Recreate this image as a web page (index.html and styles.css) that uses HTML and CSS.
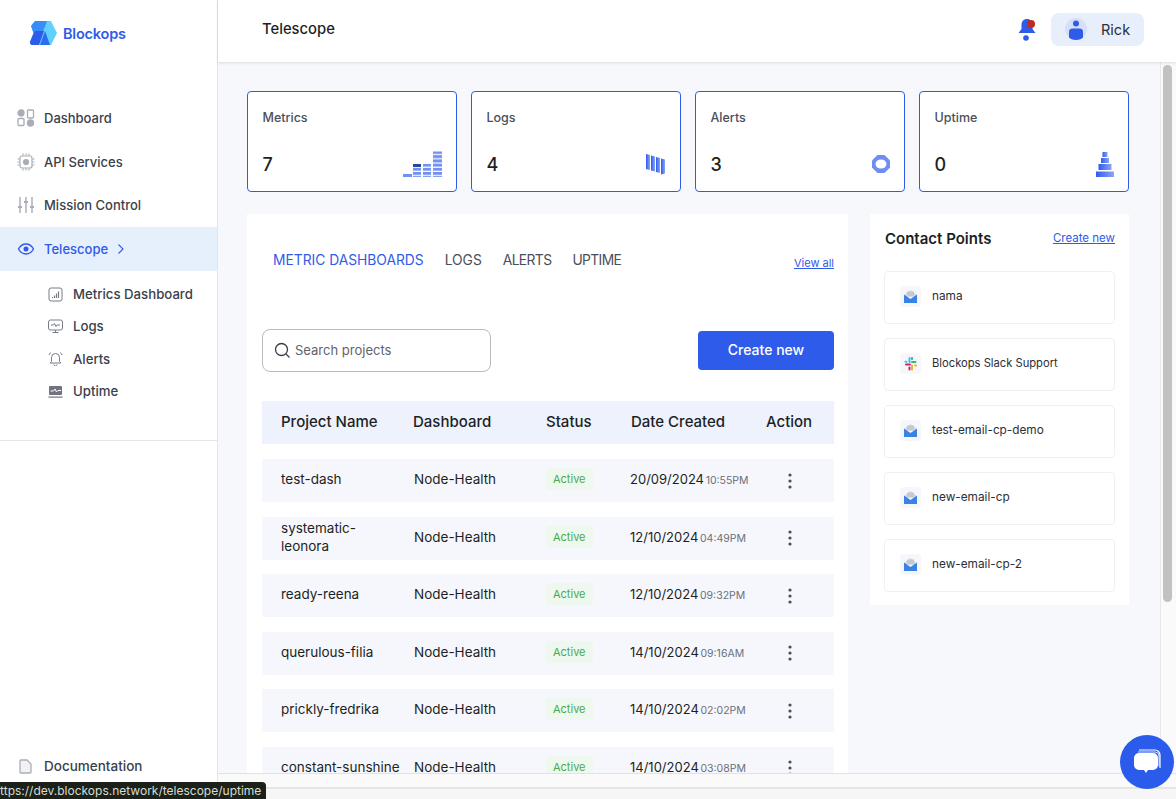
FILE: index.html
```html
<!DOCTYPE html>
<html lang="en">
<head>
  <meta charset="UTF-8">
  <meta name="viewport" content="width=device-width, initial-scale=1.0">
  <title>Telescope</title>
  <link rel="stylesheet" href="styles.css">
</head>
<body>
  <svg class="defs" width="0" height="0">
    <defs>
      <linearGradient id="blueFade" x1="0" y1="0" x2="1" y2="0">
        <stop offset="0" stop-color="#2f5bea"/>
        <stop offset="1" stop-color="#8ba6f5"/>
      </linearGradient>
      <pattern id="stripes" width="4" height="4.2" patternUnits="userSpaceOnUse">
        <rect width="4" height="3" fill="#7391f2"/>
      </pattern>
      <symbol id="mail" viewBox="0 0 21 21">
        <rect width="21" height="21" rx="4" fill="#f6f7fb"/>
        <path d="M5 8l5.500-4 5.500 4v3H5z" fill="#d8dbe2"/>
        <rect x="7" y="5.500" width="7" height="4.500" fill="#c4c8d0"/>
        <path d="M4 8.500l6.500 4.500L17 8.500V17H4z" fill="#3b82e6"/>
      </symbol>
      <symbol id="dots" viewBox="0 0 4 16">
        <circle cx="2" cy="2" r="1.600"/>
        <circle cx="2" cy="8" r="1.600"/>
        <circle cx="2" cy="14" r="1.600"/>
      </symbol>
    </defs>
  </svg>

  <div class="app">
    <aside class="sidebar">
      <div class="logo">
        <svg width="27" height="24" viewBox="0 0 27 24">
          <path d="M5 0h16l6 12-6 12H3a3 3 0 0 1-3-3l3.500-9L1 5z" fill="#62d0ff"/>
          <path d="M5 0h12L8 24H3a3 3 0 0 1-3-3l3.500-9L1 5z" fill="#3a8cf7"/>
          <path d="M0 21l5-11h9l-5 14H3a3 3 0 0 1-3-3z" fill="#2f5bea"/>
          <path d="M10 24l5-14 5 14z" fill="#2b6cf0"/>
        </svg>
        <span class="logo-text">Blockops</span>
      </div>

      <nav class="nav">
        <a class="nav-item">
          <svg width="18" height="18" viewBox="0 0 18 18" fill="none" stroke="#a9adb5" stroke-width="1.300">
            <circle cx="4" cy="4" r="3" fill="#a9adb5"/>
            <rect x="10.500" y="1" width="6" height="8" rx="1"/>
            <rect x="1" y="9.500" width="6" height="7" rx="1"/>
            <circle cx="13.500" cy="14" r="3" fill="#a9adb5"/>
          </svg>
          Dashboard
        </a>
        <a class="nav-item">
          <svg width="18" height="18" viewBox="0 0 18 18" fill="none" stroke="#a9adb5" stroke-width="1.200">
            <rect x="3" y="3" width="12" height="12" rx="2"/>
            <circle cx="9" cy="9" r="2.500" fill="#a9adb5"/>
            <path d="M6 0.500v2M9 0.500v2M12 0.500v2M6 15.500v2M9 15.500v2M12 15.500v2M0.500 6h2M0.500 9h2M0.500 12h2M15.500 6h2M15.500 9h2M15.500 12h2"/>
          </svg>
          API Services
        </a>
        <a class="nav-item">
          <svg width="18" height="18" viewBox="0 0 18 18" fill="none" stroke="#a9adb5" stroke-width="1.400">
            <path d="M3 1v16M9 1v16M15 1v16"/>
            <path d="M1 11h4M7 6h4M13 11h4" stroke-width="2"/>
          </svg>
          Mission Control
        </a>
        <a class="nav-item nav-active">
          <svg width="18" height="18" viewBox="0 0 18 18" fill="none" stroke="#2f5bea" stroke-width="1.400">
            <path d="M1.500 9c2-3.500 4.500-5 7.500-5s5.500 1.500 7.500 5c-2 3.500-4.500 5-7.500 5s-5.500-1.500-7.500-5z"/>
            <circle cx="9" cy="9" r="1.800" fill="#2f5bea"/>
          </svg>
          Telescope
          <svg width="8" height="12" viewBox="0 0 8 12" fill="none" stroke="#2f5bea" stroke-width="1.100">
            <path d="M1.500 1.500L6 6l-4.500 4.500"/>
          </svg>
        </a>
      </nav>

      <div class="subnav">
        <a class="sub-item">
          <svg width="15" height="15" viewBox="0 0 15 15" fill="none" stroke="#777c86" stroke-width="1">
            <rect x="1" y="1" width="13" height="13" rx="2"/>
            <path d="M4.500 11V10M6.500 11V8.500M8.500 11V6.500M10.500 11V4.500" stroke-width="1.200"/>
          </svg>
          Metrics Dashboard
        </a>
        <a class="sub-item">
          <svg width="15" height="15" viewBox="0 0 15 15" fill="none" stroke="#777c86" stroke-width="1">
            <rect x="0.500" y="1" width="14" height="10" rx="2"/>
            <path d="M3 6h2.500l1-1.500 1.500 3 1-1.500H12M4.500 13.500h6M7.500 11v2.500"/>
          </svg>
          Logs
        </a>
        <a class="sub-item">
          <svg width="15" height="15" viewBox="0 0 15 15" fill="none" stroke="#777c86" stroke-width="1">
            <path d="M3.500 10.500V6.500a4 4 0 0 1 8 0v4l1.500 1.500H2zM6 13.500a1.500 1.500 0 0 0 3 0M1 4l1.500-2.500M14 4l-1.500-2.500"/>
          </svg>
          Alerts
        </a>
        <a class="sub-item">
          <svg width="15" height="15" viewBox="0 0 15 15">
            <rect x="1" y="2" width="13" height="9" rx="1" fill="#6f747e"/>
            <path d="M2.500 7h3l1.500-2 1.500 3 1.500-1.500h3" fill="none" stroke="#fff" stroke-width="1"/>
            <rect x="0.500" y="12.500" width="14" height="1.200" fill="#6f747e"/>
          </svg>
          Uptime
        </a>
      </div>

      <div class="sidebar-rule"></div>

      <a class="nav-item doc-link">
        <svg width="13" height="15" viewBox="0 0 13 15" fill="none" stroke="#a9adb5" stroke-width="1.300">
          <path d="M2 1h6l4 4v8a1 1 0 0 1-1 1H2a1 1 0 0 1-1-1V2a1 1 0 0 1 1-1z" fill="#f1f2f4"/>
        </svg>
        Documentation
      </a>
    </aside>

    <div class="main">
      <header class="topbar">
        <h1 class="page-title">Telescope</h1>
        <div class="topbar-right">
          <svg class="bell" width="20" height="24" viewBox="0 0 20 24">
            <path d="M10 1c-3.500 0-5.500 2.500-5.500 6v4L1.500 15h17l-3-4V7c0-3.500-2-6-5.500-6z" fill="#2f5bea"/>
            <circle cx="9" cy="20" r="2.800" fill="#2f5bea"/>
            <circle cx="14" cy="6" r="4" fill="#c22a20"/>
          </svg>
          <div class="user-pill">
            <div class="avatar">
              <svg width="16" height="20" viewBox="0 0 16 20">
                <circle cx="8" cy="3.500" r="3" fill="#2f5bea"/>
                <path d="M1 20v-8a3.500 3.500 0 0 1 3.500-3.500h7A3.500 3.500 0 0 1 15 12v8z" fill="#2f5bea"/>
              </svg>
            </div>
            <span>Rick</span>
          </div>
        </div>
      </header>

      <div class="body-row">
        <div class="content">
          <div class="stats">
            <div class="stat-card">
              <div class="stat-label">Metrics</div>
              <div class="stat-bottom">
                <span class="stat-value">7</span>
                <svg width="39" height="26" viewBox="0 0 39 26">
                  <rect x="0" y="23" width="9" height="3" fill="#7391f2"/>
                  <rect x="10" y="13" width="8" height="13" fill="url(#stripes)"/>
                  <rect x="10" y="13" width="8" height="3" fill="#27479f"/>
                  <rect x="20" y="13" width="8" height="13" fill="url(#stripes)"/>
                  <rect x="30" y="0.500" width="9" height="25.500" fill="url(#stripes)"/>
                </svg>
              </div>
            </div>
            <div class="stat-card">
              <div class="stat-label">Logs</div>
              <div class="stat-bottom">
                <span class="stat-value">4</span>
                <svg class="stat-logs" width="19" height="21" viewBox="0 0 19 21">
                  <path d="M0 0l4 1v15l-4-1z" fill="url(#blueFade)"/>
                  <path d="M5 1.500l4 1v15l-4-1z" fill="url(#blueFade)"/>
                  <path d="M10 3l4 1v15l-4-1z" fill="url(#blueFade)"/>
                  <path d="M15 4.500l4 1v14l-4 1z" fill="url(#blueFade)"/>
                </svg>
              </div>
            </div>
            <div class="stat-card">
              <div class="stat-label">Alerts</div>
              <div class="stat-bottom">
                <span class="stat-value">3</span>
                <svg width="18" height="18" viewBox="0 0 18 18">
                  <path d="M5.500 0h7L18 5.500v7L12.500 18h-7L0 12.500v-7z" fill="#6f8df2"/>
                  <ellipse cx="9" cy="9" rx="5.500" ry="4.500" fill="#fff"/>
                </svg>
              </div>
            </div>
            <div class="stat-card">
              <div class="stat-label">Uptime</div>
              <div class="stat-bottom">
                <span class="stat-value">0</span>
                <svg width="18" height="25" viewBox="0 0 18 25">
                  <rect x="6.500" y="0" width="5" height="5" fill="url(#blueFade)"/>
                  <rect x="5" y="6" width="8" height="5" fill="url(#blueFade)"/>
                  <rect x="2.500" y="12" width="13" height="6" fill="url(#blueFade)"/>
                  <rect x="0" y="19.500" width="18" height="5.500" fill="url(#blueFade)"/>
                </svg>
              </div>
            </div>
          </div>

          <div class="panels">
            <section class="projects">
              <div class="tabs-row">
                <div class="tabs">
                  <a class="tab tab-active">METRIC DASHBOARDS</a>
                  <a class="tab">LOGS</a>
                  <a class="tab tab-tight">ALERTS</a>
                  <a class="tab tab-tight">UPTIME</a>
                </div>
                <a class="view-all">View all</a>
              </div>

              <div class="tools-row">
                <div class="search">
                  <svg width="17" height="17" viewBox="0 0 17 17" fill="none" stroke="#3b3f48" stroke-width="1.300">
                    <circle cx="7.500" cy="7.500" r="6"/>
                    <path d="M12 12l3.500 3.500"/>
                  </svg>
                  <span>Search projects</span>
                </div>
                <button class="create-btn">Create new</button>
              </div>

              <div class="table-head grid-cols">
                <span>Project Name</span>
                <span>Dashboard</span>
                <span>Status</span>
                <span>Date Created</span>
                <span>Action</span>
              </div>

              <div class="table-rows">
                <div class="table-row grid-cols">
                  <span>test-dash</span>
                  <span>Node-Health</span>
                  <span><span class="badge">Active</span></span>
                  <span class="date">20/09/2024 <small>10:55PM</small></span>
                  <span class="row-action"><svg width="4" height="16"><use href="#dots"/></svg></span>
                </div>
                <div class="table-row grid-cols">
                  <span class="two-line">systematic-<br>leonora</span>
                  <span>Node-Health</span>
                  <span><span class="badge">Active</span></span>
                  <span class="date">12/10/2024 <small>04:49PM</small></span>
                  <span class="row-action"><svg width="4" height="16"><use href="#dots"/></svg></span>
                </div>
                <div class="table-row grid-cols">
                  <span>ready-reena</span>
                  <span>Node-Health</span>
                  <span><span class="badge">Active</span></span>
                  <span class="date">12/10/2024 <small>09:32PM</small></span>
                  <span class="row-action"><svg width="4" height="16"><use href="#dots"/></svg></span>
                </div>
                <div class="table-row grid-cols">
                  <span>querulous-filia</span>
                  <span>Node-Health</span>
                  <span><span class="badge">Active</span></span>
                  <span class="date">14/10/2024 <small>09:16AM</small></span>
                  <span class="row-action"><svg width="4" height="16"><use href="#dots"/></svg></span>
                </div>
                <div class="table-row grid-cols">
                  <span>prickly-fredrika</span>
                  <span>Node-Health</span>
                  <span><span class="badge">Active</span></span>
                  <span class="date">14/10/2024 <small>02:02PM</small></span>
                  <span class="row-action"><svg width="4" height="16"><use href="#dots"/></svg></span>
                </div>
                <div class="table-row grid-cols">
                  <span>constant-sunshine</span>
                  <span>Node-Health</span>
                  <span><span class="badge">Active</span></span>
                  <span class="date">14/10/2024 <small>03:08PM</small></span>
                  <span class="row-action"><svg width="4" height="16"><use href="#dots"/></svg></span>
                </div>
              </div>
            </section>

            <section class="contacts">
              <div class="contacts-head">
                <h2>Contact Points</h2>
                <a class="create-link">Create new</a>
              </div>
              <div class="contact-list">
                <div class="contact"><svg width="21" height="21"><use href="#mail"/></svg>nama</div>
                <div class="contact contact-long">
                  <svg width="21" height="21" viewBox="0 0 21 21">
                    <rect width="21" height="21" rx="4" fill="#f6f7fb"/>
                    <path d="M6 11.500h4" stroke="#e01e5a" stroke-width="2" stroke-linecap="round"/>
                    <path d="M9.500 14.500v2" stroke="#e01e5a" stroke-width="2" stroke-linecap="round"/>
                    <path d="M9.500 5v4" stroke="#36c5f0" stroke-width="2" stroke-linecap="round"/>
                    <path d="M5.500 8.800h1" stroke="#36c5f0" stroke-width="2" stroke-linecap="round"/>
                    <path d="M12 9h3.500" stroke="#2eb67d" stroke-width="2" stroke-linecap="round"/>
                    <path d="M12 5v1" stroke="#2eb67d" stroke-width="2" stroke-linecap="round"/>
                    <path d="M12 12.500v4" stroke="#ecb22e" stroke-width="2" stroke-linecap="round"/>
                    <path d="M15 12.500h1" stroke="#ecb22e" stroke-width="2" stroke-linecap="round"/>
                  </svg>
                  Blockops Slack Support
                </div>
                <div class="contact"><svg width="21" height="21"><use href="#mail"/></svg>test-email-cp-demo</div>
                <div class="contact"><svg width="21" height="21"><use href="#mail"/></svg>new-email-cp</div>
                <div class="contact"><svg width="21" height="21"><use href="#mail"/></svg>new-email-cp-2</div>
              </div>
            </section>
          </div>
        </div>

        <div class="v-scroll"><div class="v-thumb"></div></div>
      </div>

      <div class="h-scroll"></div>
      <div class="window-edge"></div>
    </div>
  </div>

  <button class="chat-btn">
    <svg width="28" height="26" viewBox="0 0 28 26">
      <path d="M6 1h16a5 5 0 0 1 5 5v13" fill="none" stroke="#fff" stroke-width="1.200"/>
      <path d="M5 3h17a4 4 0 0 1 4 4v10" fill="none" stroke="#fff" stroke-width="0.800"/>
      <path d="M6 4h14a5 5 0 0 1 5 5v7a5 5 0 0 1-5 5h-5l-2 3-2-3H6a5 5 0 0 1-5-5V9a5 5 0 0 1 5-5z" fill="#fff"/>
    </svg>
  </button>

  <div class="status-tip"><span>https://dev.blockops.network/telescope/uptime</span></div>
</body>
</html>
```

FILE: styles.css
```css
* {
  box-sizing: border-box;
}

body {
  margin: 0;
  height: 799px;
  overflow: hidden;
  font-family: 'Inter', 'Liberation Sans', sans-serif;
  color: #1d1f24;
  background-color: #f7f8fb;
}

a {
  text-decoration: none;
}

.defs {
  position: absolute;
}

.app {
  display: flex;
  height: 799px;
}

/* Sidebar */
.sidebar {
  flex: 0 0 218px;
  display: flex;
  flex-direction: column;
  background-color: #fff;
  border-right: 1px solid #e3e5ea;
}

.logo {
  display: flex;
  align-items: flex-start;
  gap: 6px;
  height: 96.500px;
  padding: 21px 0 0 30px;
}

.logo-text {
  font-size: 14.500px;
  font-weight: 600;
  line-height: 26px;
  letter-spacing: -0.2px;
  color: #2f5bea;
}

.nav-item {
  display: flex;
  align-items: center;
  gap: 9px;
  height: 43.500px;
  padding-left: 17px;
  font-size: 13px;
  font-weight: 500;
  color: #3a3f4c;
}

.nav-active {
  background-color: #e6effc;
  color: #2f5bea;
}

.subnav {
  display: flex;
  flex-direction: column;
  gap: 12.400px;
  padding: 13.500px 0 0 48px;
}

.sub-item {
  display: flex;
  align-items: center;
  gap: 10px;
  height: 20px;
  font-size: 13.200px;
  font-weight: 500;
  color: #3a3f4c;
}

.sidebar-rule {
  height: 1px;
  margin-top: 38.500px;
  background-color: #e3e5ea;
}

.doc-link {
  margin-top: auto;
  margin-bottom: 11px;
  gap: 12px;
  padding-left: 19px;
  font-size: 13.500px;
}

/* Main column */
.main {
  flex: 1;
  min-width: 0;
  display: flex;
  flex-direction: column;
}

.topbar {
  flex: 0 0 62px;
  display: flex;
  align-items: center;
  justify-content: space-between;
  padding: 0 32px 4px 44px;
  background-color: #fff;
  box-shadow: 0 1px 3px rgba(0, 0, 0, 0.12);
  position: relative;
}

.page-title {
  margin: 0;
  font-size: 14.800px;
  font-weight: 500;
  color: #1d1f24;
}

.topbar-right {
  display: flex;
  align-items: center;
  gap: 14px;
}

.bell {
  margin-top: 2px;
}

.user-pill {
  display: flex;
  align-items: center;
  gap: 14px;
  width: 93px;
  height: 33px;
  padding-left: 14px;
  border-radius: 8px;
  background-color: #e7effd;
  font-size: 14.500px;
  color: #2b2e36;
}

.avatar {
  display: flex;
  align-items: flex-end;
  justify-content: center;
  width: 22px;
  height: 22px;
  border-radius: 50%;
  overflow: hidden;
  background-color: #d5e0f8;
}

.body-row {
  flex: 1;
  min-height: 0;
  display: flex;
}

.content {
  flex: 1;
  min-width: 0;
  overflow: hidden;
  padding: 29px 31px 0 29px;
}

.v-scroll {
  flex: 0 0 16px;
  padding: 3px 4px 0 2px;
  background-color: #fafafa;
  border-left: 1px solid #e8e8e8;
}

.v-thumb {
  height: 537px;
  border-radius: 5px;
  background-color: #c1c1c1;
}

.h-scroll {
  flex: 0 0 14px;
  background-color: #fafafa;
  border-top: 1px solid #e2e2e2;
}

.window-edge {
  flex: 0 0 12px;
  background-color: #f6f6f6;
  border-top: 2px solid #e6e6e6;
}

/* Stat cards */
.stats {
  display: grid;
  grid-template-columns: repeat(4, 210px);
  gap: 14px;
}

.stat-card {
  height: 101px;
  padding: 18px 14px 0 14.500px;
  border: 1px solid #2f5bea;
  border-radius: 4px;
  background-color: #fff;
}

.stat-label {
  font-size: 12.500px;
  font-weight: 500;
  line-height: 16px;
  color: #4a4f5a;
}

.stat-bottom {
  display: flex;
  align-items: center;
  justify-content: space-between;
  height: 26px;
  margin-top: 25px;
}

.stat-value {
  font-size: 18px;
  font-weight: 500;
}

.stat-logs {
  margin-right: 1px;
}

/* Panels */
.panels {
  display: flex;
  gap: 22px;
  margin-top: 22px;
  align-items: flex-start;
}

.projects {
  flex: 0 0 601px;
  height: 620px;
  padding: 0 14px 0 15px;
  background-color: #fff;
}

.tabs-row {
  display: flex;
  align-items: flex-start;
  justify-content: space-between;
  height: 115px;
  padding: 37px 0 0 11px;
}

.tabs {
  display: flex;
  gap: 21px;
}

.tab {
  font-size: 13.800px;
  line-height: 18px;
  color: #4a4f5a;
}

.tab-active {
  color: #2f5bea;
}

.tab-tight {
  letter-spacing: -0.6px;
}

.view-all {
  margin-top: 5px;
  font-size: 11px;
  color: #2f5bea;
  text-decoration: underline;
}

.tools-row {
  display: flex;
  align-items: center;
  justify-content: space-between;
  height: 43px;
}

.search {
  display: flex;
  align-items: center;
  gap: 4px;
  width: 229px;
  height: 43px;
  padding: 0 0 1px 11px;
  border: 1px solid #b9bbc0;
  border-radius: 8px;
  font-size: 13px;
  color: #5f636c;
}

.create-btn {
  width: 136px;
  height: 39px;
  padding: 0 0 3px;
  border: none;
  border-radius: 4px;
  background-color: #2f5bea;
  color: #fff;
  font-family: inherit;
  font-size: 14px;
  font-weight: 500;
}

.grid-cols {
  display: grid;
  grid-template-columns: 133px 132px 85px 135px 1fr;
  align-items: center;
  padding-left: 19px;
}

.table-head {
  height: 43px;
  margin-top: 29px;
  padding-bottom: 3px;
  background-color: #eef2fd;
  font-size: 15px;
  font-weight: 500;
}

.table-head span:nth-child(2) {
  margin-left: -1px;
}

.table-rows {
  display: flex;
  flex-direction: column;
  gap: 14.500px;
  margin-top: 15px;
}

.table-row {
  height: 43px;
  padding-bottom: 3px;
  background-color: #f6f7fc;
  font-size: 13.500px;
  color: #1d1f24;
}

.two-line {
  line-height: 18px;
}

.badge {
  display: inline-block;
  padding: 0 7px;
  border-radius: 4px;
  background-color: #eef8ee;
  color: #4aa84e;
  font-size: 11px;
  line-height: 22px;
}

.date {
  font-size: 13px;
  white-space: nowrap;
  margin-left: -1px;
}

.date small {
  margin-left: -2px;
  font-size: 10.500px;
  color: #6b7079;
}

.row-action {
  padding-left: 22px;
}

.row-action svg {
  display: block;
  margin-top: 3px;
  fill: #4a4d55;
}

/* Contact points */
.contacts {
  flex: 0 0 259px;
  height: 391px;
  padding: 0 14px;
  background-color: #fff;
}

.contacts-head {
  display: flex;
  align-items: center;
  justify-content: space-between;
  height: 57px;
  padding: 0 0 9px 1px;
}

.contacts-head h2 {
  margin: 0;
  font-size: 15px;
  font-weight: 600;
}

.create-link {
  font-size: 11.500px;
  color: #2f5bea;
  text-decoration: underline;
}

.contact-list {
  display: flex;
  flex-direction: column;
  gap: 14px;
}

.contact {
  display: flex;
  align-items: center;
  gap: 11px;
  height: 53px;
  padding: 0 0 3px 15px;
  border: 1px solid #eff0f3;
  border-radius: 4px;
  font-size: 11.800px;
  color: #2b2e36;
}

.contact-long {
  font-size: 11.200px;
}

/* Overlays */
.chat-btn {
  position: absolute;
  left: 1120px;
  top: 735px;
  display: flex;
  align-items: center;
  justify-content: center;
  width: 54px;
  height: 54px;
  padding: 0;
  border: none;
  border-radius: 50%;
  background-color: #2a5bea;
}

.status-tip {
  position: absolute;
  left: 0;
  top: 782px;
  width: 266px;
  height: 17px;
  overflow: hidden;
  border-radius: 0 4px 0 0;
  background-color: #1b2118;
  color: #d8dcd2;
  font-size: 12px;
  line-height: 18px;
  white-space: nowrap;
}

.status-tip span {
  margin-left: -7px;
}
```
